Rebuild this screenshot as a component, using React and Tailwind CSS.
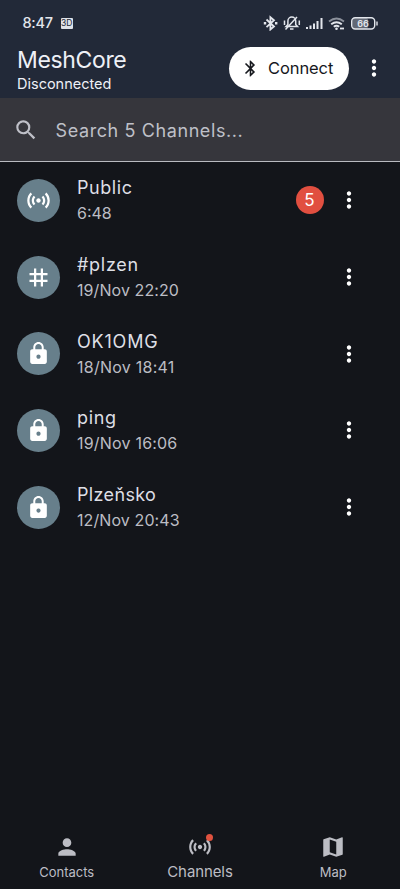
import {
  MdBluetooth,
  MdLock,
  MdMap,
  MdMoreVert,
  MdPerson,
  MdSearch,
  MdSensors,
  MdTag,
} from "react-icons/md";

const channels = [
  { name: "Public", time: "6:48", icon: MdSensors, iconClass: "size-[27px]", unread: 5, nameClass: "tracking-[0.55px]", timeClass: "tracking-normal" },
  { name: "#plzen", time: "19/Nov 22:20", icon: MdTag, iconClass: "size-[27px]", nameClass: "tracking-[0.7px]", timeClass: "tracking-[0.08px]" },
  { name: "OK1OMG", time: "18/Nov 18:41", icon: MdLock, iconClass: "size-[25px]", nameClass: "tracking-[0.8px]", timeClass: "tracking-[0.25px]" },
  { name: "ping", time: "19/Nov 16:06", icon: MdLock, iconClass: "size-[25px]", nameClass: "tracking-[0.7px]", timeClass: "tracking-[0.2px]" },
  { name: "Plzeňsko", time: "12/Nov 20:43", icon: MdLock, iconClass: "size-[25px]", nameClass: "tracking-[0.35px]", timeClass: "tracking-[0.1px]" },
];

function StatusBar() {
  return (
    <div className="flex h-[46px] items-center justify-between pl-[22.5px] pr-[22px] text-[#e3e6ec]">
      <div className="flex items-center gap-[8px]">
        <span className="text-[14.5px] font-medium leading-none tracking-[-0.3px]">8:47</span>
        <span className="flex h-[11px] w-[12px] items-center justify-center rounded-[1px] bg-[#dfe2e8] text-[8.5px] leading-none text-[#222938]">3D</span>
      </div>
      <svg className="h-[16px] w-[116px]" viewBox="262 15 116 16" fill="none" stroke="currentColor" strokeWidth="1.4">
        {/* Bluetooth */}
        <path d="M266.500 19.500l7.500 7-3.600 3V17.200l3.600 3-7.500 7" strokeWidth="1.800" />
        <path d="M263.800 23.300h2.400M275 23.300h2.400" strokeWidth="2.400" />
        {/* Silent bell */}
        <path d="M286 26.500h11.500l-1.800-2v-3.500a3.900 3.900 0 0 0-7.800 0v3.500zM290 29h3.500M285.500 29.500l11.500-12.500M284.500 20.500v4.500M299.300 20.500v4.500" strokeWidth="1.500" />
        {/* Signal */}
        <path d="M307 29v-2M310.500 29v-3.500M314 29v-5.500M317.500 29v-8M321.500 29V18" strokeWidth="2" />
        {/* Wifi */}
        <path d="M329 21.500q7.500-6 15 0" stroke="#8b909b" strokeWidth="1.800" />
        <path d="M331.200 24.200q5.300-4 10.600 0M333.800 26.700q2.700-2 5.400 0" strokeWidth="2" />
        <circle cx="336.500" cy="28.700" r="1.300" fill="currentColor" stroke="none" />
        <path d="M340 28.500h4" strokeWidth="1.800" />
        {/* Battery */}
        <rect x="352.200" y="17.700" width="16" height="11.300" rx="3" fill="#626875" stroke="none" />
        <rect x="351.700" y="17.700" width="23" height="11.300" rx="3.500" />
        <path d="M377 21.500v4" />
        <text x="363" y="26.700" textAnchor="middle" fontSize="9" fontWeight="600" fill="currentColor" stroke="none">66</text>
      </svg>
    </div>
  );
}

function ChannelRow({ channel }) {
  const Icon = channel.icon;
  return (
    <li className="flex h-[76.7px] items-center pl-[17px] pr-[38.5px]">
      <div className="flex size-[43px] shrink-0 items-center justify-center rounded-full bg-[#677f8b] text-white">
        <Icon className={channel.iconClass} />
      </div>
      <div className="ml-[17px] flex-1">
        <div className={`text-[18px] leading-[26px] text-[#dedfe5] ${channel.nameClass}`}>{channel.name}</div>
        <div className={`text-[16px] leading-[24px] text-[#bcbdc4] ${channel.timeClass}`}>{channel.time}</div>
      </div>
      {channel.unread && (
        <span className="mr-[12px] flex size-[28px] items-center justify-center rounded-full bg-[#e14f40] text-[17px] text-white">
          {channel.unread}
        </span>
      )}
      <MdMoreVert className="size-[26px] text-white" />
    </li>
  );
}

export default function App() {
  return (
    <div className="flex h-[889px] w-[400px] flex-col overflow-hidden bg-[#13151a] font-['Inter',sans-serif] font-normal">
      <header className="h-[98px] bg-[#222938]">
        <StatusBar />
        <div className="flex items-center pl-[17px] pr-[13px]">
          <div className="flex-1 text-[#eef0f6]">
            <h1 className="text-[23px] leading-[28px] tracking-[-0.35px]">MeshCore</h1>
            <p className="text-[14.5px] leading-[19px]">Disconnected</p>
          </div>
          <button className="mb-[3px] flex h-[43px] w-[120px] items-center rounded-full bg-white pl-[12px] text-[#16181d]">
            <MdBluetooth className="size-[19px]" />
            <span className="ml-[8px] text-[16.5px] tracking-[-0.1px]">Connect</span>
          </button>
          <MdMoreVert className="mb-[3px] ml-[12px] size-[26px] text-white" />
        </div>
      </header>

      <div className="flex h-[64px] items-center border-b border-[#b9bac0] bg-[#36363c] pl-[12.5px] text-[#bfc0c8]">
        <MdSearch className="size-[26px]" />
        <span className="ml-[17px] mt-[2px] text-[18px] tracking-[0.6px]">Search 5 Channels...</span>
      </div>

      <ul className="flex-1">
        {channels.map((channel) => (
          <ChannelRow key={channel.name} channel={channel} />
        ))}
      </ul>

      <nav className="grid h-[60px] grid-cols-3 text-[#bcbdc4]">
        <button className="flex flex-col items-center pt-[5px]">
          <MdPerson className="size-[26px]" />
          <span className="mt-[3px] text-[13px] leading-[18px]">Contacts</span>
        </button>
        <button className="flex flex-col items-center pt-[5px]">
          <span className="relative">
            <MdSensors className="size-[26px]" />
            <span className="absolute right-0 top-0 size-[7px] rounded-full bg-[#e0523f]" />
          </span>
          <span className="mt-[3px] text-[15px] leading-[18px] tracking-[-0.1px]">Channels</span>
        </button>
        <button className="flex flex-col items-center pt-[5px]">
          <MdMap className="size-[26px]" />
          <span className="mt-[3px] text-[13px] leading-[18px]">Map</span>
        </button>
      </nav>
    </div>
  );
}
